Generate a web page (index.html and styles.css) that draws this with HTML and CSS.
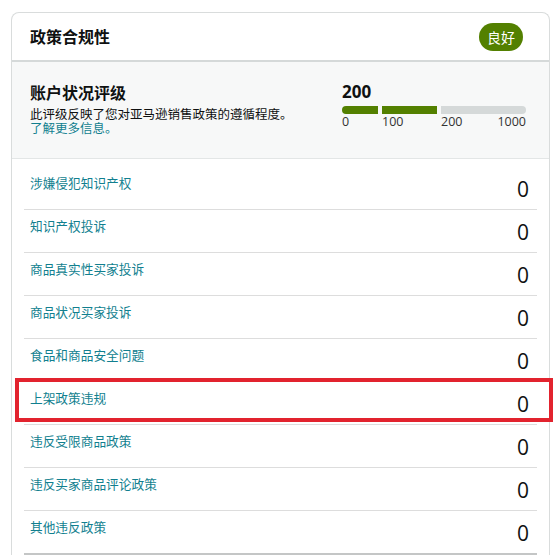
FILE: index.html
```html
<!DOCTYPE html>
<html lang="zh-CN">
<head>
<meta charset="utf-8">
<title>政策合规性</title>
<link rel="stylesheet" href="styles.css">
</head>
<body>
<section class="card">
  <header class="card-header">
    <h2 class="card-title">政策合规性</h2>
    <span class="badge">良好</span>
  </header>
  <div class="rating">
    <div class="rating-text">
      <h3 class="rating-title">账户状况评级</h3>
      <p class="rating-desc">此评级反映了您对亚马逊销售政策的遵循程度。</p>
      <a class="rating-link" href="#">了解更多信息。</a>
    </div>
    <div class="score">
      <div class="score-value">200</div>
      <div class="bar">
        <span class="seg seg-a"></span>
        <span class="seg seg-b"></span>
        <span class="seg seg-c"></span>
      </div>
      <div class="scale">
        <span class="tick tick-a">0</span>
        <span class="tick tick-b">100</span>
        <span class="tick tick-c"><span>200</span><span>1000</span></span>
      </div>
    </div>
  </div>
  <ul class="list">
    <li class="row"><a class="row-label" href="#">涉嫌侵犯知识产权</a><span class="row-num">0</span></li>
    <li class="row"><a class="row-label" href="#">知识产权投诉</a><span class="row-num">0</span></li>
    <li class="row"><a class="row-label" href="#">商品真实性买家投诉</a><span class="row-num">0</span></li>
    <li class="row"><a class="row-label" href="#">商品状况买家投诉</a><span class="row-num">0</span></li>
    <li class="row"><a class="row-label" href="#">食品和商品安全问题</a><span class="row-num">0</span></li>
    <li class="row flagged"><a class="row-label" href="#">上架政策违规</a><span class="row-num">0</span></li>
    <li class="row"><a class="row-label" href="#">违反受限商品政策</a><span class="row-num">0</span></li>
    <li class="row"><a class="row-label" href="#">违反买家商品评论政策</a><span class="row-num">0</span></li>
    <li class="row"><a class="row-label" href="#">其他违反政策</a><span class="row-num">0</span></li>
  </ul>
</section>
</body>
</html>
```
FILE: styles.css
```css
html, body {
  margin: 0;
  padding: 0;
  background: #ffffff;
}
body {
  font-family: "Open Sans", "Noto Sans CJK SC", sans-serif;
  color: #0f1111;
  overflow: hidden;
  height: 559px;
}
.card {
  margin: 12px 0 0 11px;
  width: 539px;
  box-sizing: border-box;
  border: 1px solid #d9dcdc;
  border-bottom: none;
  border-radius: 8px 8px 0 0;
  background: #fff;
}
.card-header {
  height: 47px;
  display: flex;
  align-items: center;
  justify-content: space-between;
  padding: 0 26px 0 18px;
  border-bottom: 2px solid #d5d9d9;
}
.card-title {
  margin: -2px 0 0;
  font-size: 16px;
  font-weight: 700;
  line-height: 20px;
  font-family: "Noto Sans CJK SC", sans-serif;
}
.badge {
  width: 44px;
  height: 28px;
  border-radius: 14px;
  background: #538000;
  color: #fff;
  font-size: 14px;
  line-height: 28px;
  text-align: center;
  font-family: "Noto Sans CJK SC", sans-serif;
}
.rating {
  height: 97px;
  box-sizing: border-box;
  background: #f7f8f8;
  border-bottom: 1px solid #e3e6e6;
  display: flex;
  justify-content: space-between;
  padding: 20px 23px 0 18px;
}
.rating-text {
  font-family: "Noto Sans CJK SC", sans-serif;
}
.rating-title {
  margin: 0 0 5px;
  font-size: 16px;
  line-height: 20px;
  font-weight: 700;
}
.rating-desc {
  margin: 0;
  font-size: 12.5px;
  line-height: 14px;
  color: #0f1111;
}
.rating-link {
  display: block;
  font-size: 12.5px;
  line-height: 14px;
  color: #117f8f;
  text-decoration: none;
}
.score {
  width: 184px;
}
.score-value {
  font-size: 17px;
  font-weight: 700;
  line-height: 20px;
}
.bar {
  display: flex;
  gap: 4px;
  margin-top: 4px;
  height: 8px;
}
.seg {
  display: block;
  height: 8px;
}
.seg-a {
  width: 36px;
  background: #538000;
  border-radius: 4px 0 0 4px;
}
.seg-b {
  width: 55px;
  background: #538000;
}
.seg-c {
  flex: 1;
  background: #d5d9d9;
  border-radius: 0 4px 4px 0;
}
.scale {
  display: flex;
  margin-top: 1px;
  font-size: 12.5px;
  line-height: 14px;
  color: #333;
}
.tick-a { width: 40px; }
.tick-b { width: 59px; }
.tick-c {
  flex: 1;
  display: flex;
  justify-content: space-between;
}
.list {
  list-style: none;
  margin: 0 12px;
  padding: 8px 0 0;
}
.row {
  position: relative;
  height: 42px;
  display: flex;
  justify-content: space-between;
  align-items: flex-start;
  padding: 0 8px 0 6px;
  border-bottom: 1px solid #dddddd;
}
.row:last-child {
  border-bottom: 2px solid #c4c6c6;
}
.row-label {
  margin-top: 8px;
  font-family: "Noto Sans CJK SC", sans-serif;
  font-size: 12.7px;
  line-height: 16px;
  color: #117f8f;
  text-decoration: none;
}
.row-num {
  margin-top: 9px;
  font-size: 21px;
  line-height: 26px;
  color: #0f1111;
}
.flagged::after {
  content: "";
  position: absolute;
  left: -9px;
  right: -16px;
  top: -4px;
  height: 44px;
  box-sizing: border-box;
  border: 4px solid #e2232e;
}
```
